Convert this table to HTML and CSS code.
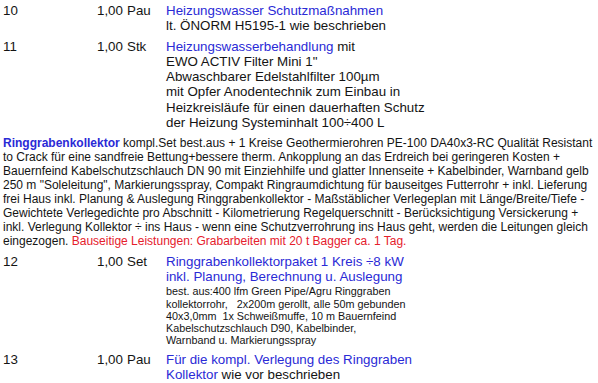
FILE: index.html
```html
<!DOCTYPE html>
<html lang="de">
<head>
<meta charset="utf-8">
<link rel="stylesheet" href="styles.css">
</head>
<body>
<div class="doc">
  <div class="row r10">
    <div class="pos">10</div>
    <div class="qty">1,00</div>
    <div class="unit">Pau</div>
    <div class="desc"><span class="blue">Heizungswasser Schutzmaßnahmen</span><br>lt. ÖNORM H5195-1 wie beschrieben</div>
  </div>
  <div class="row r11">
    <div class="pos">11</div>
    <div class="qty">1,00</div>
    <div class="unit">Stk</div>
    <div class="desc"><span class="blue">Heizungswasserbehandlung</span> mit<br>EWO ACTIV Filter Mini 1"<br>Abwaschbarer Edelstahlfilter 100µm<br>mit Opfer Anodentechnik zum Einbau in<br>Heizkreisläufe für einen dauerhaften Schutz<br>der Heizung Systeminhalt 100÷400 L</div>
  </div>
  <p class="para"><strong class="blue">Ringgrabenkollektor</strong> kompl.Set best.aus + 1 Kreise Geothermierohren PE-100 DA40x3-RC Qualität Resistant to Crack für eine sandfreie Bettung+bessere therm. Ankopplung an das Erdreich bei geringeren Kosten + Bauernfeind Kabelschutzschlauch DN 90 mit Einziehhilfe und glatter Innenseite + Kabelbinder, Warnband gelb 250 m "Soleleitung", Markierungsspray, Compakt Ringraumdichtung für bauseitges Futterrohr + inkl. Lieferung frei Haus inkl. Planung &amp; Auslegung Ringgrabenkollektor - Maßstäblicher Verlegeplan mit Länge/Breite/Tiefe - Gewichtete Verlegedichte pro Abschnitt - Kilometrierung Regelquerschnitt - Berücksichtigung Versickerung + inkl. Verlegung Kollektor ÷ ins Haus - wenn eine Schutzverrohrung ins Haus geht, werden die Leitungen gleich eingezogen. <span class="red">Bauseitige Leistungen: Grabarbeiten mit 20 t Bagger ca. 1 Tag.</span></p>
  <div class="row r12">
    <div class="pos">12</div>
    <div class="qty">1,00</div>
    <div class="unit">Set</div>
    <div class="desc"><span class="blue">Ringgrabenkollektorpaket 1 Kreis ÷8 kW<br>inkl. Planung, Berechnung u. Auslegung</span>
      <div class="small">best. aus:400 lfm Green Pipe/Agru Ringgraben<br>kollektorrohr,&nbsp;&nbsp;&nbsp;2x200m gerollt, alle 50m gebunden<br>40x3,0mm&nbsp;&nbsp;1x Schweißmuffe, 10 m Bauernfeind<br>Kabelschutzschlauch D90, Kabelbinder,<br>Warnband u. Markierungsspray</div>
    </div>
  </div>
  <div class="row r13">
    <div class="pos">13</div>
    <div class="qty">1,00</div>
    <div class="unit">Pau</div>
    <div class="desc"><span class="blue">Für die kompl. Verlegung des Ringgraben<br>Kollektor</span> wie vor beschrieben</div>
  </div>
</div>
</body>
</html>
```

FILE: styles.css
```css
html, body {
  margin: 0;
  padding: 0;
  background: #ffffff;
}
body {
  font-family: "Liberation Sans", Arial, sans-serif;
  font-size: 12px;
  color: #141414;
}
.doc {
  padding: 3px 3px 0 3px;
  display: flex;
  flex-direction: column;
}
.row {
  display: grid;
  grid-template-columns: 94px 30px 39px 1fr;
  font-size: 13.33px;
  line-height: 15.3px;
}
.pos, .qty, .unit {
  white-space: nowrap;
}
.r11 { margin-top: 5px; }
.para {
  margin: 7px 0 0 0;
  line-height: 13.9px;
}
.r12 { margin-top: 5px; }
.r13 { margin-top: 5px; }
.blue { color: #2a2ad6; }
strong.blue { font-weight: bold; }
.red { color: #e5202c; }
.small {
  font-size: 10.8px;
  line-height: 12.3px;
  margin-top: 1px;
}
```
